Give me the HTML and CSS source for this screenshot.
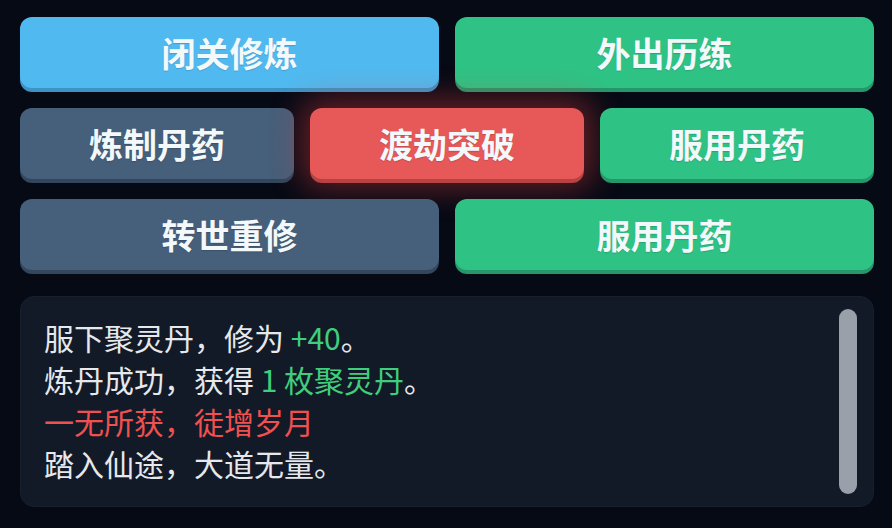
FILE: index.html
```html
<!DOCTYPE html>
<html lang="zh">
<head>
<meta charset="utf-8">
<link rel="stylesheet" href="styles.css">
</head>
<body>
<div class="app">
  <div class="row two">
    <button class="btn blue">闭关修炼</button>
    <button class="btn green">外出历练</button>
  </div>
  <div class="row three">
    <button class="btn slate">炼制丹药</button>
    <button class="btn red">渡劫突破</button>
    <button class="btn green">服用丹药</button>
  </div>
  <div class="row two">
    <button class="btn slate">转世重修</button>
    <button class="btn green">服用丹药</button>
  </div>
  <div class="log">
    <div class="lines">
      <div class="line">服下聚灵丹，修为 <span class="good">+40</span>。</div>
      <div class="line">炼丹成功，获得 <span class="good">1 枚聚灵丹</span>。</div>
      <div class="line bad">一无所获，徒增岁月</div>
      <div class="line">踏入仙途，大道无量。</div>
    </div>
    <div class="thumb"></div>
  </div>
</div>
</body>
</html>
```
FILE: styles.css
```css
* { box-sizing: border-box; }
html, body {
  margin: 0;
  padding: 0;
  background: #060a15;
  width: 892px;
  height: 528px;
  overflow: hidden;
}
.app {
  padding: 17px 18px 0 20px;
  display: flex;
  flex-direction: column;
  gap: 20px;
  font-family: "Noto Sans CJK SC", "Noto Sans", sans-serif;
}
.row {
  display: grid;
  gap: 16px;
}
.row.two { grid-template-columns: 1fr 1fr; }
.row.three { grid-template-columns: 1fr 1fr 1fr; }
.btn {
  height: 71px;
  border: none;
  border-radius: 12px;
  font-family: "Noto Sans CJK SC", "Noto Sans", sans-serif;
  font-weight: 700;
  font-size: 34px;
  color: #f3f8fb;
  padding: 0;
  text-shadow: 0 1px 1px rgba(0,0,0,0.15);
}
.blue { background: #50baf0; box-shadow: 0 4px 0 #3c93c4; }
.green { background: #2ec385; box-shadow: 0 4px 0 #25976a; }
.slate { background: #465f7a; box-shadow: 0 4px 0 #33465c; }
.red {
  background: #e75858;
  box-shadow: 0 4px 0 #b64242, 0 0 30px 10px rgba(230, 60, 60, 0.4);
}
.log {
  margin-top: 6px;
  height: 211px;
  background: #131a27;
  border: 1px solid #181f2d;
  border-radius: 14px;
  display: flex;
  padding: 12px 16px 12px 23px;
}
.lines {
  flex: 1;
  padding-top: 7px;
  font-size: 30px;
  line-height: 42px;
  color: #e6e8ec;
}
.good { color: #3fcf7c; }
.bad { color: #ef5050; }
.thumb {
  width: 18px;
  border-radius: 9px;
  background: #9aa0aa;
}
```
